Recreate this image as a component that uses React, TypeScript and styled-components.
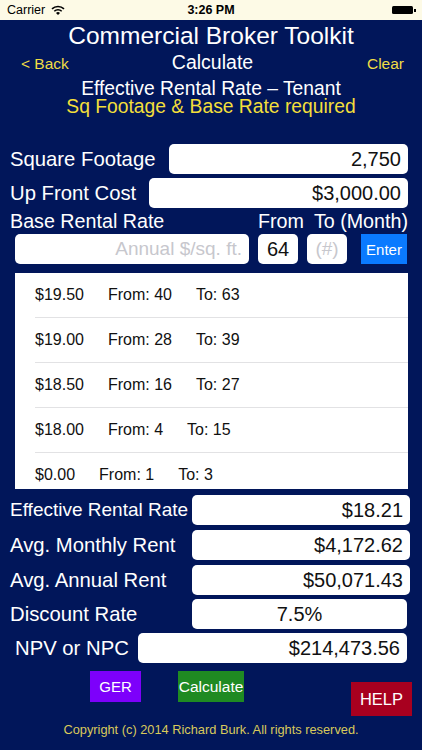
import styled, { createGlobalStyle } from "styled-components";

const GlobalStyle = createGlobalStyle`
  html, body {
    margin: 0;
    padding: 0;
    background: #01165a;
  }
  body {
    font-family: "Liberation Sans", Arial, Helvetica, sans-serif;
  }
  * {
    box-sizing: border-box;
  }
`;

const Screen = styled.div`
  width: 422px;
  height: 750px;
  background: #01165a;
  overflow: hidden;
  display: flex;
  flex-direction: column;
`;

// iOS style status bar
const StatusBar = styled.div`
  height: 20px;
  background: #fdfae6;
  display: grid;
  grid-template-columns: 1fr auto 1fr;
  align-items: center;
  padding: 0 7px;
  font-size: 12.5px;
  color: #000;
`;

const Carrier = styled.div`
  display: flex;
  align-items: center;
  gap: 6px;
`;

const Clock = styled.div`
  font-weight: bold;
`;

const Battery = styled.div`
  justify-self: end;
  display: flex;
  align-items: center;
  margin-right: -1px;
`;

const BatteryBody = styled.div`
  width: 21px;
  height: 8px;
  background: #000;
  border-radius: 1.5px;
`;

const BatteryNub = styled.div`
  width: 2px;
  height: 3px;
  background: #000;
  margin-left: 1px;
`;

const Title = styled.div`
  margin-top: 1px;
  height: 30px;
  line-height: 30px;
  font-size: 24.5px;
  color: #fff;
  text-align: center;
`;

const NavRow = styled.div`
  display: grid;
  grid-template-columns: 1fr auto 1fr;
  align-items: baseline;
  height: 22px;
  line-height: 22px;
  padding: 0 18px 0 21px;
`;

const NavLink = styled.div<{ $right?: boolean }>`
  font-size: 15.5px;
  color: #efdc45;
  justify-self: ${(p) => (p.$right ? "end" : "start")};
`;

const NavTitle = styled.div`
  font-size: 19.5px;
  color: #fff;
`;

const Subtitle = styled.div`
  margin-top: 7px;
  line-height: 18px;
  font-size: 19.3px;
  text-align: center;
`;

const SubLine = styled.div<{ $warn?: boolean }>`
  color: ${(p) => (p.$warn ? "#f3df3a" : "#fff")};
`;

const Form = styled.div`
  padding: 0 14px 0 10px;
`;

const FieldRow = styled.div<{ $mt: number; $mr?: number }>`
  display: flex;
  justify-content: space-between;
  align-items: center;
  height: 30px;
  margin-top: ${(p) => p.$mt}px;
  margin-right: ${(p) => p.$mr ?? 0}px;
`;

const Label = styled.div<{ $size?: number; $indent?: number }>`
  font-size: ${(p) => p.$size ?? 20.3}px;
  color: #fff;
  padding-left: ${(p) => p.$indent ?? 0}px;
  white-space: nowrap;
`;

const Field = styled.div<{ $w: number; $align?: string; $muted?: boolean; $size?: number }>`
  width: ${(p) => p.$w}px;
  height: 30px;
  background: #fff;
  border-radius: 5px;
  display: flex;
  align-items: center;
  justify-content: ${(p) =>
    p.$align === "center" ? "center" : p.$align === "left" ? "flex-start" : "flex-end"};
  padding: 0 7px;
  font-size: ${(p) => p.$size ?? 20}px;
  color: ${(p) => (p.$muted ? "#c7c7cd" : "#111")};
  white-space: nowrap;
`;

const RateHead = styled.div`
  display: flex;
  align-items: baseline;
  height: 24px;
  line-height: 24px;
  margin-top: 1px;
  font-size: 19.7px;
  color: #fff;
`;

const RateCols = styled.div`
  margin-left: auto;
  display: flex;
  gap: 10px;
`;

const RateInputs = styled.div`
  display: flex;
  align-items: center;
  gap: 9px;
  height: 30px;
  margin-top: 1px;
  padding-left: 5px;
`;

const EnterButton = styled.div`
  width: 46px;
  height: 30px;
  margin-left: 5px;
  background: #0a7aff;
  color: #fff;
  font-size: 15px;
  display: flex;
  align-items: center;
  justify-content: center;
`;

const RangeList = styled.div`
  margin: 9px 0 0 5px;
  width: 393px;
  height: 216px;
  background: #fff;
  overflow: hidden;
`;

const RangeRow = styled.div`
  height: 45px;
  margin-left: 20px;
  border-bottom: 1px solid #e2e2e4;
  display: flex;
  align-items: center;
  gap: 24px;
  font-size: 16px;
  color: #111;
`;

const Output = styled.div`
  margin-top: 6px;
  padding: 0 12px 0 10px;
`;

const ButtonRow = styled.div`
  margin-top: 8px;
  height: 45px;
  display: flex;
  align-items: flex-start;
  padding: 0 10px 0 90px;
`;

const ActionButton = styled.div<{ $bg: string; $w: number; $h: number; $ml?: string; $mt?: number; $size?: number }>`
  width: ${(p) => p.$w}px;
  height: ${(p) => p.$h}px;
  margin-left: ${(p) => p.$ml ?? "0"};
  margin-top: ${(p) => p.$mt ?? 0}px;
  background: ${(p) => p.$bg};
  color: #fff;
  font-size: ${(p) => p.$size ?? 15}px;
  display: flex;
  align-items: center;
  justify-content: center;
  white-space: nowrap;
`;

const Copyright = styled.div`
  margin-top: 6px;
  line-height: 16px;
  font-size: 12.8px;
  color: #d9c95a;
  text-align: center;
`;

const WifiIcon = () => (
  <svg width="14" height="10" viewBox="0 0 14 10">
    <path d="M1 3.9 A8.6 8.6 0 0 1 13 3.9" stroke="#000" strokeWidth="1.6" fill="none" />
    <path d="M3.3 6.3 A5.3 5.3 0 0 1 10.7 6.3" stroke="#000" strokeWidth="1.6" fill="none" />
    <path d="M7 10 L5 7.9 A2.8 2.8 0 0 1 9 7.9 Z" fill="#000" />
  </svg>
);

const ranges = [
  { rate: "$19.50", from: 40, to: 63 },
  { rate: "$19.00", from: 28, to: 39 },
  { rate: "$18.50", from: 16, to: 27 },
  { rate: "$18.00", from: 4, to: 15 },
  { rate: "$0.00", from: 1, to: 3 },
];

const App = () => {
  return (
    <Screen>
      <GlobalStyle />
      <StatusBar>
        <Carrier>
          Carrier
          <WifiIcon />
        </Carrier>
        <Clock>3:26 PM</Clock>
        <Battery>
          <BatteryBody />
          <BatteryNub />
        </Battery>
      </StatusBar>

      <Title>Commercial Broker Toolkit</Title>
      <NavRow>
        <NavLink>&lt; Back</NavLink>
        <NavTitle>Calculate</NavTitle>
        <NavLink $right>Clear</NavLink>
      </NavRow>
      <Subtitle>
        <SubLine>Effective Rental Rate – Tenant</SubLine>
        <SubLine $warn>Sq Footage &amp; Base Rate required</SubLine>
      </Subtitle>

      <Form>
        <FieldRow $mt={28}>
          <Label>Square Footage</Label>
          <Field $w={239}>2,750</Field>
        </FieldRow>
        <FieldRow $mt={4}>
          <Label>Up Front Cost</Label>
          <Field $w={259}>$3,000.00</Field>
        </FieldRow>
        <RateHead>
          <span>Base Rental Rate</span>
          <RateCols>
            <span>From</span>
            <span>To (Month)</span>
          </RateCols>
        </RateHead>
        <RateInputs>
          <Field $w={234} $muted $size={19}>
            Annual $/sq. ft.
          </Field>
          <Field $w={40} $align="center">
            64
          </Field>
          <Field $w={40} $align="center" $muted $size={19}>
            (#)
          </Field>
          <EnterButton>Enter</EnterButton>
        </RateInputs>
        <RangeList>
          {ranges.map((r) => (
            <RangeRow key={r.rate}>
              <span>{r.rate}</span>
              <span>From: {r.from}</span>
              <span>To: {r.to}</span>
            </RangeRow>
          ))}
        </RangeList>
      </Form>

      <Output>
        <FieldRow $mt={0}>
          <Label $size={19}>Effective Rental Rate</Label>
          <Field $w={218}>$18.21</Field>
        </FieldRow>
        <FieldRow $mt={5}>
          <Label>Avg. Monthly Rent</Label>
          <Field $w={218}>$4,172.62</Field>
        </FieldRow>
        <FieldRow $mt={5}>
          <Label>Avg. Annual Rent</Label>
          <Field $w={218}>$50,071.43</Field>
        </FieldRow>
        <FieldRow $mt={4} $mr={3}>
          <Label>Discount Rate</Label>
          <Field $w={215} $align="center">
            7.5%
          </Field>
        </FieldRow>
        <FieldRow $mt={4} $mr={3}>
          <Label $indent={5}>NPV or NPC</Label>
          <Field $w={269}>$214,473.56</Field>
        </FieldRow>
      </Output>

      <ButtonRow>
        <ActionButton $bg="#7d00fb" $w={51} $h={31}>
          GER
        </ActionButton>
        <ActionButton $bg="#1f8a22" $w={66} $h={31} $ml="37px" $size={15.5}>
          Calculate
        </ActionButton>
        <ActionButton $bg="#a8001f" $w={61} $h={34} $ml="auto" $mt={11} $size={16.5}>
          HELP
        </ActionButton>
      </ButtonRow>
      <Copyright>Copyright (c) 2014 Richard Burk. All rights reserved.</Copyright>
    </Screen>
  );
};

export default App;
